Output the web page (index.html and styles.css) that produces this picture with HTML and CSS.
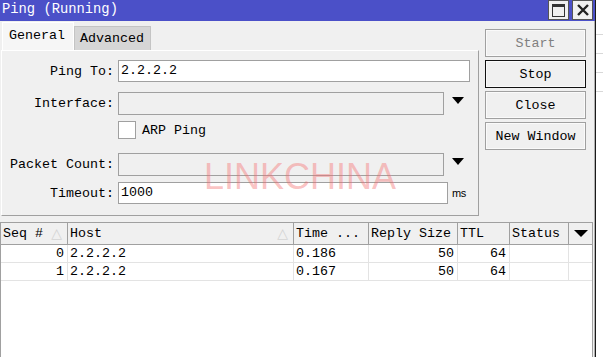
FILE: index.html
```html
<!DOCTYPE html>
<html lang="en">
<head>
    <meta charset="UTF-8">
    <meta name="viewport" content="width=device-width, initial-scale=1.0">
    <title>Ping (Running)</title>
    <link rel="stylesheet" href="styles.css">
</head>
<body>
    <div class="window">
        <div class="titlebar">
            <span class="title">Ping (Running)</span>
            <div class="title-btns">
                <span class="tb-btn"><span class="max-icon"></span></span>
                <span class="tb-btn">
                    <svg width="12" height="12" viewBox="0 0 12 12"><path d="M1 1 L11 11 M11 1 L1 11" stroke="#222" stroke-width="2.4"/></svg>
                </span>
            </div>
        </div>

        <div class="top">
            <div class="left-side">
                <div class="tabs">
                    <div class="tab active">General</div>
                    <div class="tab">Advanced</div>
                </div>
                <div class="panel">
                    <div class="form-row row-ping">
                        <label class="field-label">Ping To:</label>
                        <div class="text-input wide">2.2.2.2</div>
                    </div>
                    <div class="form-row row-iface">
                        <label class="field-label">Interface:</label>
                        <div class="select-box"></div>
                        <span class="drop-arrow"></span>
                    </div>
                    <div class="form-row row-arp">
                        <span class="field-label"></span>
                        <span class="check-box"></span>
                        <span class="check-label">ARP Ping</span>
                    </div>
                    <div class="form-row row-count">
                        <label class="field-label">Packet Count:</label>
                        <div class="select-box"></div>
                        <span class="drop-arrow"></span>
                    </div>
                    <div class="form-row row-timeout">
                        <label class="field-label">Timeout:</label>
                        <div class="text-input timeout">1000</div>
                        <span class="unit">ms</span>
                    </div>
                </div>
            </div>
            <div class="actions">
                <button class="action-btn disabled">Start</button>
                <button class="action-btn default">Stop</button>
                <button class="action-btn">Close</button>
                <button class="action-btn">New Window</button>
            </div>
        </div>

        <div class="result-table">
            <div class="table-row table-head">
                <div class="cell"><span>Seq #</span><span class="sort">&#9651;</span></div>
                <div class="cell"><span>Host</span><span class="sort">&#9651;</span></div>
                <div class="cell">Time ...</div>
                <div class="cell">Reply Size</div>
                <div class="cell">TTL</div>
                <div class="cell">Status</div>
                <div class="cell menu-cell"><span class="drop-arrow small"></span></div>
            </div>
            <div class="table-row">
                <div class="cell num">0</div>
                <div class="cell">2.2.2.2</div>
                <div class="cell">0.186</div>
                <div class="cell num">50</div>
                <div class="cell num">64</div>
                <div class="cell"></div>
                <div class="cell"></div>
            </div>
            <div class="table-row">
                <div class="cell num">1</div>
                <div class="cell">2.2.2.2</div>
                <div class="cell">0.167</div>
                <div class="cell num">50</div>
                <div class="cell num">64</div>
                <div class="cell"></div>
                <div class="cell"></div>
            </div>
        </div>

        <div class="watermark">LINKCHINA</div>
    </div>
    <div class="behind">
        <div class="behind-line"></div>
        <div class="behind-line"></div>
        <div class="behind-line"></div>
        <div class="behind-line"></div>
    </div>
</body>
</html>
```

FILE: styles.css
```css
* {
    box-sizing: border-box;
}
body {
    margin: 0;
    width: 603px;
    height: 357px;
    overflow: hidden;
    display: flex;
    background-color: #fff;
    font-family: "Liberation Mono", "DejaVu Sans Mono", monospace;
    font-size: 13.33px;
    color: #000;
}
.window {
    position: relative;
    width: 596px;
    height: 357px;
    display: flex;
    flex-direction: column;
    background-color: #f0f0f0;
    border-right: 1px solid #1a1a1a;
    box-shadow: inset -1px 0 0 #b0b0b0;
}
.titlebar {
    height: 21px;
    display: flex;
    justify-content: space-between;
    align-items: flex-start;
    background-color: #4b50c8;
    color: #fff;
    padding-left: 2px;
}
.title {
    line-height: 20px;
    font-size: 13.8px;
}
.title-btns {
    display: flex;
    gap: 3px;
    margin-right: 2px;
}
.tb-btn {
    width: 21px;
    height: 20px;
    display: flex;
    align-items: center;
    justify-content: center;
    background-color: #f0f0f0;
    border: 1px solid #555;
}
.max-icon {
    width: 13px;
    height: 13px;
    border: 1px solid #333;
    border-top-width: 3px;
}
.top {
    display: flex;
    height: 195px;
}
.left-side {
    margin-left: 1px;
    width: 478px;
    display: flex;
    flex-direction: column;
}
.tabs {
    height: 29px;
    display: flex;
    align-items: flex-end;
    padding-left: 1px;
}
.tab {
    height: 24px;
    padding: 0 4px 0 5px;
    line-height: 24px;
    background-color: #d6d6d6;
    border: 1px solid #c4c4c4;
    border-bottom: none;
    width: 77px;
}
.tab.active {
    height: 28px;
    width: 72px;
    line-height: 26px;
    background-color: #f6f6f6;
    border-color: #fff;
    padding-left: 6px;
}
.panel {
    height: 166px;
    padding-top: 9px;
    border: 1px solid #a0a0a0;
    border-top-color: #fff;
    border-left-color: #fff;
    background-color: #f0f0f0;
}
.form-row {
    display: flex;
    align-items: center;
}
.row-iface {
    margin-top: 10px;
}
.row-arp {
    margin-top: 6px;
}
.row-count {
    margin-top: 14px;
}
.row-timeout {
    margin-top: 6px;
}
.field-label {
    width: 112px;
    margin-right: 4px;
    text-align: right;
}
.text-input {
    height: 22px;
    padding-left: 2px;
    line-height: 20px;
    background-color: #fff;
    border: 1px solid #a0a0a0;
}
.text-input.wide {
    width: 352px;
}
.text-input.timeout {
    width: 330px;
}
.select-box {
    width: 326px;
    height: 23px;
    border: 1px solid #a0a0a0;
    background-color: #f0f0f0;
}
.drop-arrow {
    margin-left: 8px;
    width: 0;
    height: 0;
    border-left: 6px solid transparent;
    border-right: 6px solid transparent;
    border-top: 7px solid #000;
    margin-top: -6px;
}
.drop-arrow.small {
    margin: 0;
    border-left-width: 7px;
    border-right-width: 7px;
}
.check-box {
    width: 18px;
    height: 18px;
    background-color: #fff;
    border: 1px solid #a0a0a0;
}
.check-label {
    margin-left: 6px;
}
.unit {
    margin-left: 4px;
    font-size: 11px;
    font-family: "Liberation Sans", Arial, sans-serif;
    letter-spacing: -0.5px;
}
.actions {
    margin-left: 6px;
    margin-top: 8px;
    display: flex;
    flex-direction: column;
    gap: 3px;
}
.action-btn {
    width: 101px;
    height: 28px;
    font-family: inherit;
    font-size: 13.33px;
    color: #000;
    background-color: #f0f0f0;
    border: 1px solid #a0a0a0;
    box-shadow: inset 0 0 0 1px #fafafa;
    padding: 0;
}
.action-btn.disabled {
    color: #808080;
}
.action-btn.default {
    border-color: #111;
}
.result-table {
    flex: 1;
    margin-top: 6px;
    width: 593px;
    background-color: #fff;
    border: 1px solid #a0a0a0;
    border-bottom: none;
}
.table-row {
    display: grid;
    grid-template-columns: 67px 226px 75px 89px 52px 59px 23px;
    height: 18px;
    border-bottom: 1px solid #e3e3e3;
}
.table-head {
    height: 22px;
    background-color: #f0f0f0;
    border-bottom-color: #a0a0a0;
}
.cell {
    padding: 0 2px;
    line-height: 17px;
    border-right: 1px solid #e3e3e3;
    white-space: nowrap;
    overflow: hidden;
}
.table-head .cell {
    display: flex;
    justify-content: space-between;
    align-items: center;
    line-height: 21px;
    border-right-color: #a0a0a0;
}
.cell:last-child {
    border-right: none;
}
.cell.num {
    text-align: right;
    padding-right: 3px;
}
.sort {
    color: #d4d4d4;
    font-family: "DejaVu Sans", sans-serif;
    font-size: 14px;
    padding-right: 3px;
}
.table-head .menu-cell {
    justify-content: center;
}
.watermark {
    position: absolute;
    left: 204px;
    top: 156px;
    font-family: "Liberation Sans", Arial, sans-serif;
    font-size: 36px;
    color: rgba(245, 110, 110, 0.42);
    pointer-events: none;
}
.behind {
    flex: 1;
    padding-top: 34px;
}
.behind-line {
    height: 19px;
    border-top: 1px solid #d8d8d8;
}
```
